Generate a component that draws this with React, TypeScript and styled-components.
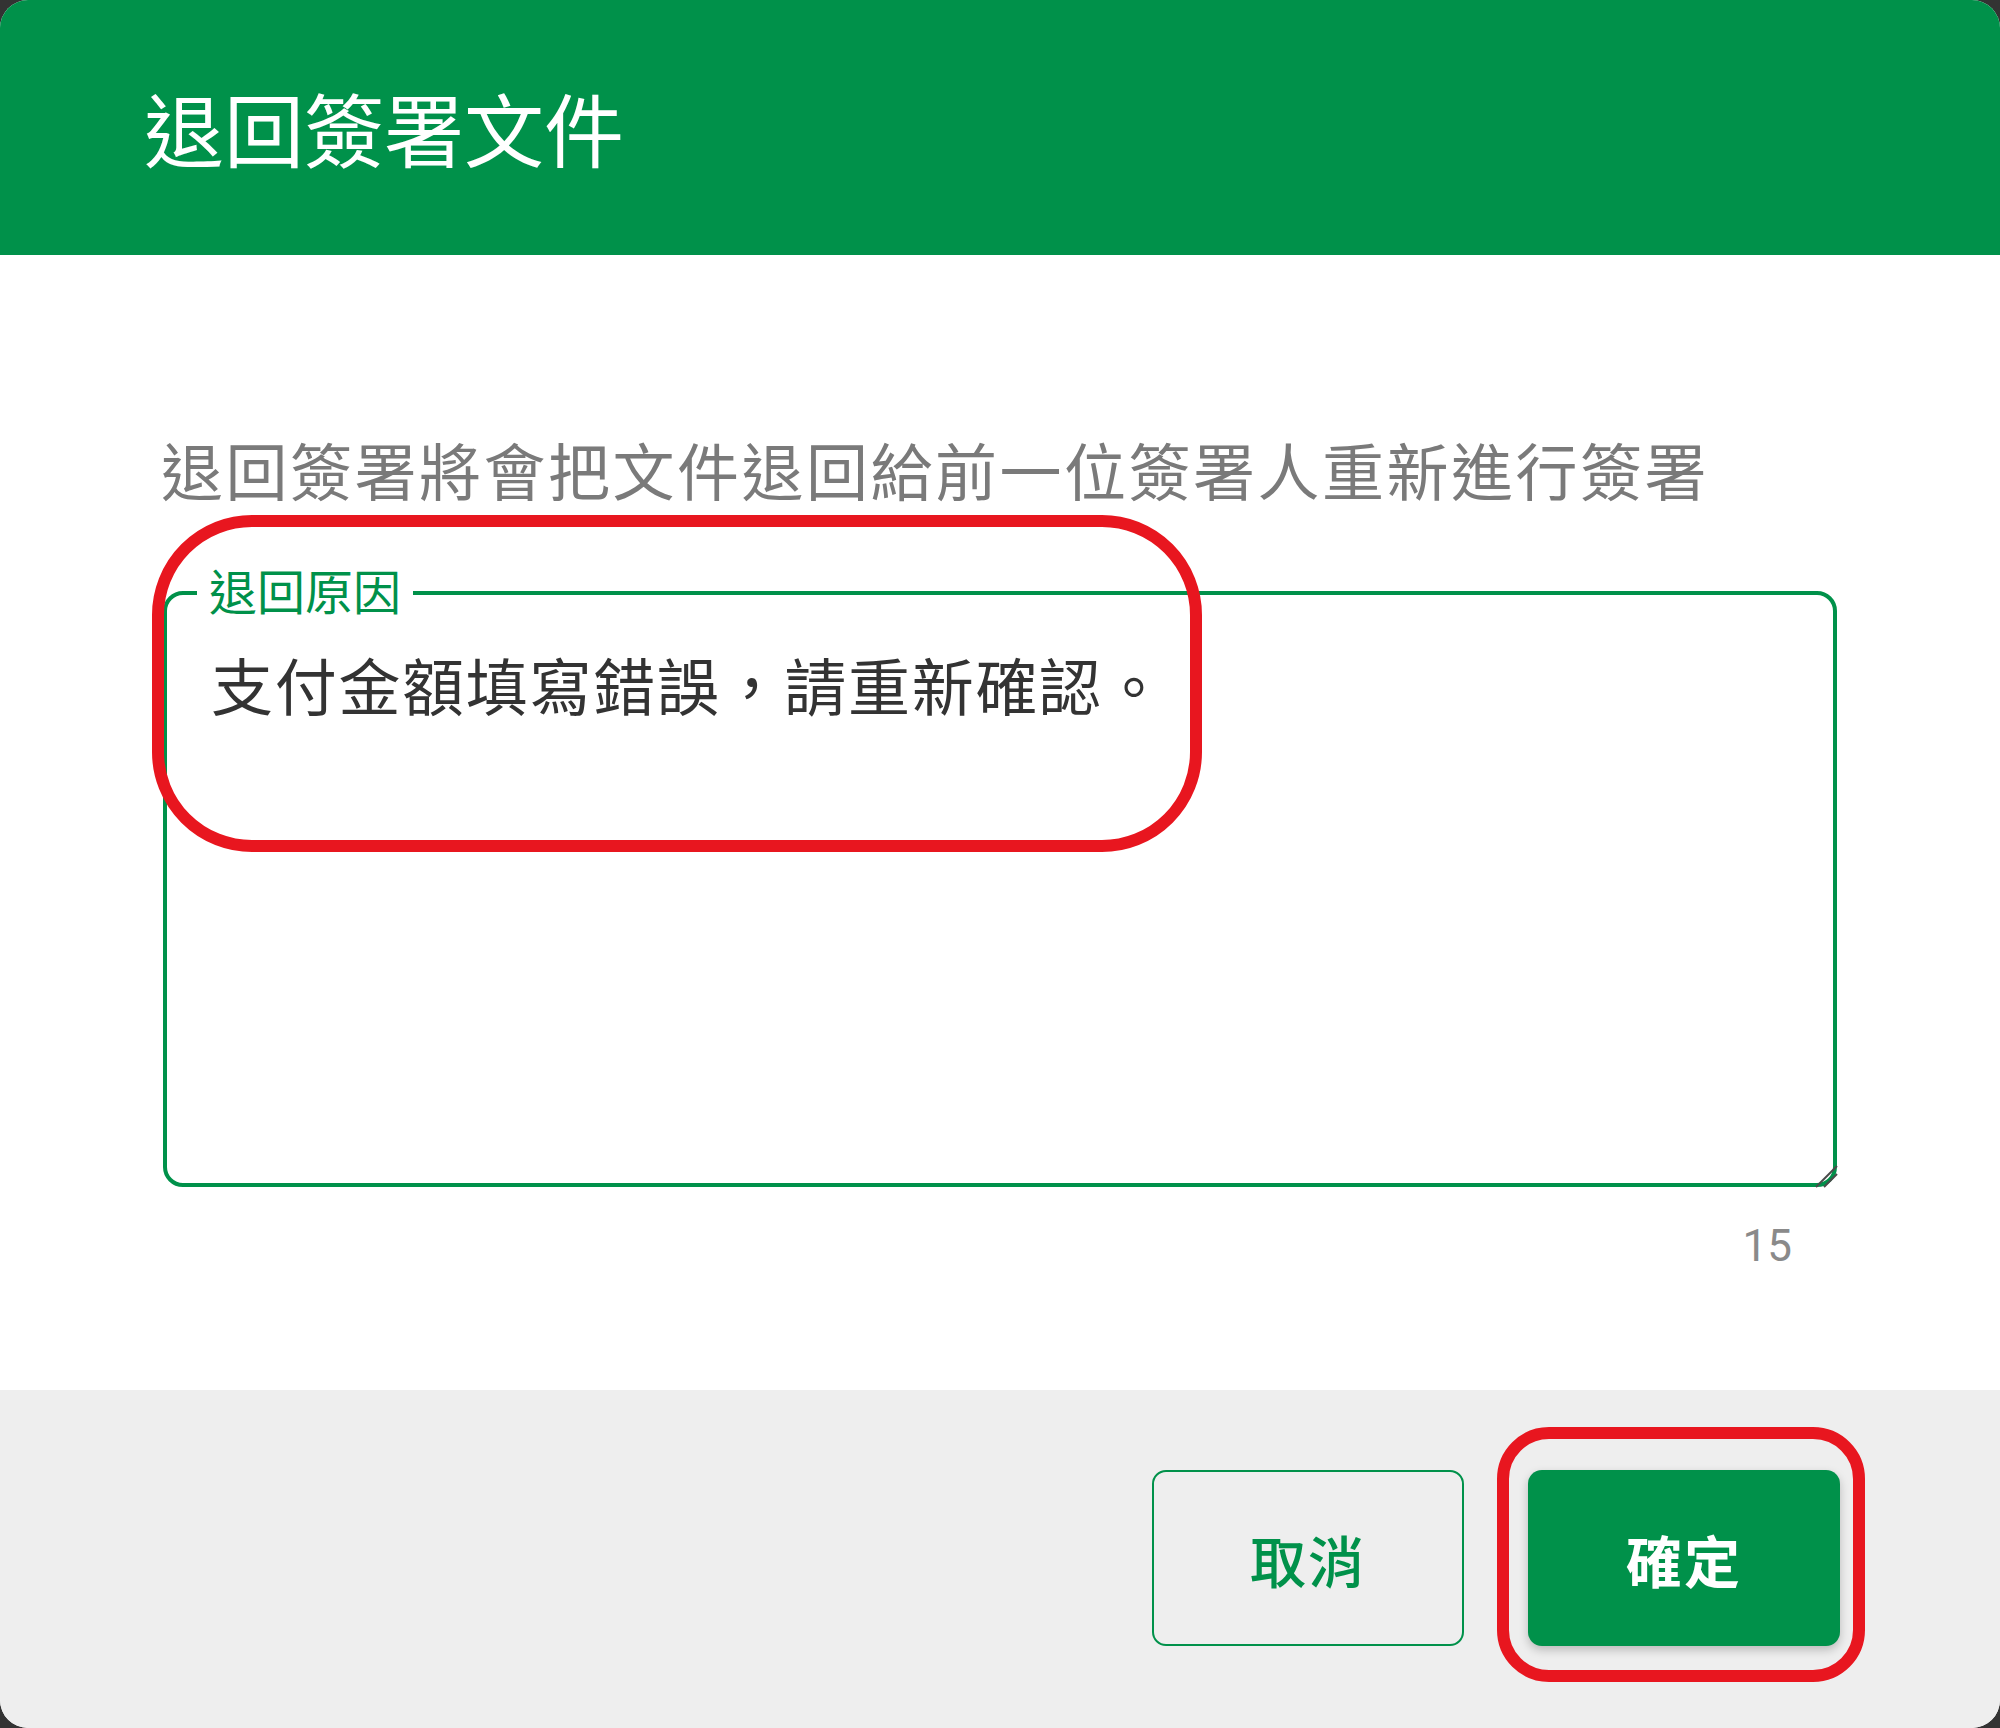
import { useState } from "react";
import styled, { createGlobalStyle } from "styled-components";

const GREEN = "#00914a";

const GlobalStyle = createGlobalStyle`
  html, body {
    margin: 0;
    padding: 0;
    background: #333333;
    font-family: "Noto Sans CJK TC", "Noto Sans", sans-serif;
  }
`;

export default function App() {
  const [reason, setReason] = useState("支付金額填寫錯誤，請重新確認。");

  return (
    <>
      <GlobalStyle />
      <Dialog>
        <Header>
          <Title>退回簽署文件</Title>
        </Header>
        <Body>
          <Description>退回簽署將會把文件退回給前一位簽署人重新進行簽署</Description>
          <Field>
            <FieldLabel>退回原因</FieldLabel>
            <ReasonInput
              value={reason}
              onChange={(e) => setReason(e.target.value)}
            />
            <Grip viewBox="0 0 28 28">
              <line x1="6" y1="27" x2="27" y2="6" />
              <line x1="14" y1="27" x2="27" y2="14" />
            </Grip>
          </Field>
          <Counter>{reason.length}</Counter>
        </Body>
        <Footer>
          <OutlineButton>取消</OutlineButton>
          <SolidButton>確定</SolidButton>
        </Footer>
        {/* red highlight marks drawn over the screenshot */}
        <Highlight $x={152} $y={515} $w={1050} $h={337} $r={100} />
        <Highlight $x={1497} $y={1427} $w={368} $h={255} $r={52} />
      </Dialog>
    </>
  );
}

const Dialog = styled.div`
  position: relative;
  width: 2000px;
  height: 1728px;
  border-radius: 28px;
  overflow: hidden;
  background: #ffffff;
  display: flex;
  flex-direction: column;
`;

const Header = styled.header`
  height: 255px;
  flex-shrink: 0;
  background: ${GREEN};
  display: flex;
  align-items: center;
  padding: 0 144px;
  box-sizing: border-box;
`;

const Title = styled.h1`
  margin: 0 0 4px;
  color: #ffffff;
  font-size: 80px;
  font-weight: 400;
  line-height: 1;
`;

const Body = styled.section`
  flex: 1;
  display: flex;
  flex-direction: column;
  padding: 0 163px;
`;

const Description = styled.p`
  margin: 177px 0 0 -2px;
  font-size: 62px;
  line-height: 74px;
  letter-spacing: 2.5px;
  color: #7a7a7a;
  white-space: nowrap;
`;

const Field = styled.div`
  position: relative;
  margin-top: 85px;
`;

const FieldLabel = styled.label`
  position: absolute;
  left: 34px;
  top: -31px;
  padding: 0 12px;
  background: #ffffff;
  color: ${GREEN};
  font-size: 48px;
  line-height: 58px;
`;

const ReasonInput = styled.textarea`
  display: block;
  width: 100%;
  height: 596px;
  box-sizing: border-box;
  border: 4px solid ${GREEN};
  border-radius: 20px;
  padding: 46px 44px;
  font-family: inherit;
  font-size: 62px;
  line-height: 87px;
  letter-spacing: 1.7px;
  color: #333333;
  outline: none;
  resize: none;
  background: #ffffff;
`;

const Grip = styled.svg`
  position: absolute;
  right: -1px;
  bottom: -1px;
  width: 28px;
  height: 28px;
  pointer-events: none;

  line {
    stroke: #4a4a4a;
    stroke-width: 2;
  }
`;

const Counter = styled.div`
  margin-top: 33px;
  padding-right: 45px;
  text-align: right;
  font-family: "Liberation Sans Narrow", Roboto, sans-serif;
  font-size: 44px;
  line-height: 53px;
  color: #8a8a8a;
`;

const Footer = styled.footer`
  height: 338px;
  flex-shrink: 0;
  background: #eeeeee;
  display: flex;
  align-items: center;
  justify-content: flex-end;
  gap: 64px;
  padding: 0 160px 2px 0;
  box-sizing: border-box;
`;

const BaseButton = styled.button`
  width: 312px;
  height: 176px;
  border-radius: 14px;
  font-family: inherit;
  font-size: 56px;
  font-weight: 500;
  letter-spacing: 2px;
  cursor: pointer;
  box-sizing: border-box;
`;

const OutlineButton = styled(BaseButton)`
  background: transparent;
  border: 2px solid ${GREEN};
  color: ${GREEN};
`;

const SolidButton = styled(BaseButton)`
  background: ${GREEN};
  border: none;
  color: #ffffff;
  font-weight: 700;
  box-shadow: 0 4px 10px rgba(0, 0, 0, 0.22);
`;

const Highlight = styled.div<{ $x: number; $y: number; $w: number; $h: number; $r: number }>`
  position: absolute;
  left: ${(p) => p.$x}px;
  top: ${(p) => p.$y}px;
  width: ${(p) => p.$w}px;
  height: ${(p) => p.$h}px;
  border: 12px solid #e8161f;
  border-radius: ${(p) => p.$r}px;
  box-sizing: border-box;
  pointer-events: none;
`;
